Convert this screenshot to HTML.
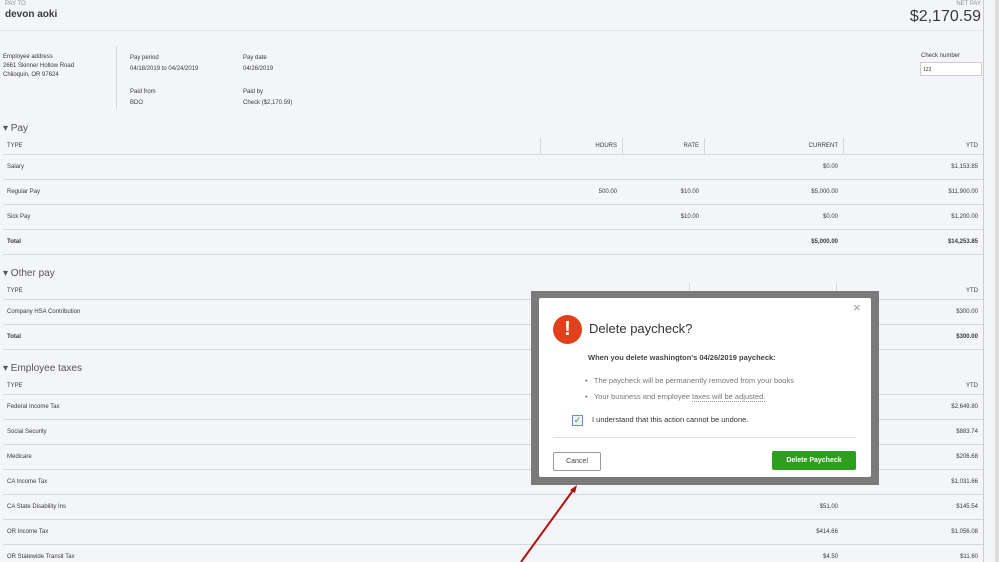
<!DOCTYPE html>
<html><head><meta charset="utf-8"><style>
*{margin:0;padding:0;box-sizing:border-box}
body{width:999px;height:562px;overflow:hidden;background:#f4f5f8;font-family:"Liberation Sans",sans-serif;color:#393a3d;position:relative}
.a{position:absolute;white-space:nowrap}
.s{font-size:6px}
.hl{position:absolute;left:3px;width:980px;height:1px;background:#d4d7dc}
.vl{position:absolute;width:1px;background:#d4d7dc}
.r{text-align:right}
.sec{font-size:10px;color:#555}
</style></head><body>
<div class="a" style="left:5px;top:1px;font-size:6px;color:#8d9096">PAY TO</div>
<div class="a" style="left:5px;top:9px;font-size:10px;font-weight:bold">devon aoki</div>
<div class="a" style="right:18px;top:1px;font-size:6px;color:#8d9096">NET PAY</div>
<div class="a" style="right:18px;top:8px;font-size:16px;color:#393a3d">$2,170.59</div>
<div style="position:absolute;left:0;top:30px;width:983px;height:1px;background:#e4e6ea"></div>
<div style="position:absolute;left:983px;top:0;width:16px;height:562px;background:#f4f5f8;border-left:1px solid #ccc"></div>
<div style="position:absolute;left:995px;top:0;width:4px;height:562px;background:#ddd"></div>

<div class="a s" style="left:3px;top:53px;line-height:9px">Employee address<br>2661 Skinner Hollow Road<br>Chiloquin, OR 97624</div>
<div class="vl" style="left:116px;top:46px;height:63px"></div>
<div class="a s" style="left:130px;top:53px;line-height:11px">Pay period<br>04/18/2019 to 04/24/2019</div>
<div class="a s" style="left:243px;top:53px;line-height:11px">Pay date<br>04/26/2019</div>
<div class="a s" style="left:130px;top:87px;line-height:11px">Paid from<br>BDO</div>
<div class="a s" style="left:243px;top:87px;line-height:11px">Paid by<br>Check ($2,170.59)</div>
<div class="a s" style="left:921px;top:53px">Check number</div>
<div class="a" style="left:920px;top:62px;width:62px;height:14px;background:#fff;border:1px solid #ccc;font-size:5px;padding:4px 2px">123</div>

<div class="a sec" style="left:3px;top:123px">▾ Pay</div>
<div class="a s" style="left:7px;top:143px">TYPE</div>
<div class="a s r" style="right:382px;top:143px">HOURS</div>
<div class="a s r" style="right:300px;top:143px">RATE</div>
<div class="a s r" style="right:161px;top:143px">CURRENT</div>
<div class="a s r" style="right:21px;top:143px">YTD</div>
<div class="vl" style="left:540px;top:138px;height:16px"></div>
<div class="vl" style="left:622px;top:138px;height:16px"></div>
<div class="vl" style="left:704px;top:138px;height:16px"></div>
<div class="vl" style="left:843px;top:138px;height:16px"></div>
<div class="hl" style="top:154px"></div>
<div class="a s" style="left:7px;top:164px">Salary</div><div class="a s" style="right:161px;top:164px">$0.00</div><div class="a s" style="right:21px;top:164px">$1,153.85</div>
<div class="hl" style="top:179px"></div>
<div class="a s" style="left:7px;top:189px">Regular Pay</div><div class="a s" style="right:382px;top:189px">500.00</div><div class="a s" style="right:300px;top:189px">$10.00</div><div class="a s" style="right:161px;top:189px">$5,000.00</div><div class="a s" style="right:21px;top:189px">$11,900.00</div>
<div class="hl" style="top:204px"></div>
<div class="a s" style="left:7px;top:214px">Sick Pay</div><div class="a s" style="right:300px;top:214px">$10.00</div><div class="a s" style="right:161px;top:214px">$0.00</div><div class="a s" style="right:21px;top:214px">$1,200.00</div>
<div class="hl" style="top:229px"></div>
<div class="a s" style="left:7px;top:239px;font-weight:bold">Total</div><div class="a s" style="right:161px;top:239px;font-weight:bold">$5,000.00</div><div class="a s" style="right:21px;top:239px;font-weight:bold">$14,253.85</div>
<div class="hl" style="top:254px"></div>

<div class="a sec" style="left:3px;top:268px">▾ Other pay</div>
<div class="a s" style="left:7px;top:288px">TYPE</div>
<div class="a s" style="right:21px;top:288px">YTD</div>
<div class="vl" style="left:836px;top:283px;height:16px"></div>
<div class="vl" style="left:689px;top:283px;height:16px"></div>
<div class="hl" style="top:299px"></div>
<div class="a s" style="left:7px;top:309px">Company HSA Contribution</div><div class="a s" style="right:21px;top:309px">$300.00</div>
<div class="hl" style="top:324px"></div>
<div class="a s" style="left:7px;top:334px;font-weight:bold">Total</div><div class="a s" style="right:21px;top:334px;font-weight:bold">$300.00</div>
<div class="hl" style="top:349px"></div>

<div class="a sec" style="left:3px;top:363px">▾ Employee taxes</div>
<div class="a s" style="left:7px;top:383px">TYPE</div>
<div class="a s" style="right:21px;top:383px">YTD</div>
<div class="hl" style="top:394px"></div>
<div class="a s" style="left:7px;top:404px">Federal Income Tax</div><div class="a s" style="right:21px;top:404px">$2,649.80</div>
<div class="hl" style="top:419px"></div>
<div class="a s" style="left:7px;top:429px">Social Security</div><div class="a s" style="right:21px;top:429px">$883.74</div>
<div class="hl" style="top:444px"></div>
<div class="a s" style="left:7px;top:454px">Medicare</div><div class="a s" style="right:21px;top:454px">$206.68</div>
<div class="hl" style="top:469px"></div>
<div class="a s" style="left:7px;top:479px">CA Income Tax</div><div class="a s" style="right:21px;top:479px">$1,031.66</div>
<div class="hl" style="top:494px"></div>
<div class="a s" style="left:7px;top:504px">CA State Disability Ins</div><div class="a s" style="right:161px;top:504px">$51.00</div><div class="a s" style="right:21px;top:504px">$145.54</div>
<div class="hl" style="top:519px"></div>
<div class="a s" style="left:7px;top:529px">OR Income Tax</div><div class="a s" style="right:161px;top:529px">$414.66</div><div class="a s" style="right:21px;top:529px">$1,056.08</div>
<div class="hl" style="top:544px"></div>
<div class="a s" style="left:7px;top:554px">OR Statewide Transit Tax</div><div class="a s" style="right:161px;top:554px">$4.50</div><div class="a s" style="right:21px;top:554px">$11.60</div>

<div style="position:absolute;left:531px;top:291px;width:348px;height:194px;background:#7a7a7a"></div>
<div style="position:absolute;left:539px;top:298px;width:332px;height:179px;background:#fff;border-radius:2px">
 <div class="a" style="left:314px;top:2px;font-size:13px;color:#999">×</div>
 <div class="a" style="left:14px;top:17px;width:29px;height:29px;border-radius:50%;background:#e0401c;color:#fff;font-weight:bold;font-size:20px;text-align:center;line-height:29px">!</div>
 <div class="a" style="left:50px;top:23px;font-size:13px;color:#333">Delete paycheck?</div>
 <div class="a" style="left:49px;top:55px;font-size:7.5px;font-weight:bold;color:#444">When you delete washington's 04/26/2019 paycheck:</div>
 <div class="a" style="left:46px;top:78px;font-size:7.5px;color:#777">•&nbsp;&nbsp;&nbsp;The paycheck will be permanently removed from your books</div>
 <div class="a" style="left:46px;top:94px;font-size:7.5px;color:#777">•&nbsp;&nbsp;&nbsp;Your business and employee <span style="border-bottom:1px dotted #999">taxes will be adjusted.</span></div>
 <div class="a" style="left:33px;top:117px;width:11px;height:11px;border:1px solid #6a8ed6;background:#eef3fb;color:#2ca01c;font-size:9px;line-height:9px;text-align:center">✓</div>
 <div class="a" style="left:53px;top:117px;font-size:7.5px;color:#333">I understand that this action cannot be undone.</div>
 <div style="position:absolute;left:14px;top:139px;width:303px;height:1px;background:#ddd"></div>
 <div class="a" style="left:14px;top:154px;width:48px;height:19px;border:1px solid #999;border-radius:2px;font-size:7px;text-align:center;line-height:17px;color:#444">Cancel</div>
 <div class="a" style="left:233px;top:153px;width:84px;height:19px;background:#2ca01c;border-radius:2px;font-size:7px;font-weight:bold;text-align:center;line-height:19px;color:#fff">Delete Paycheck</div>
</div>
<svg style="position:absolute;left:0;top:0" width="999" height="562"><line x1="521" y1="562" x2="574" y2="489" stroke="#b01010" stroke-width="2"/><polygon points="577,485 570,490 575,493" fill="#b01010"/></svg>
</body></html>
